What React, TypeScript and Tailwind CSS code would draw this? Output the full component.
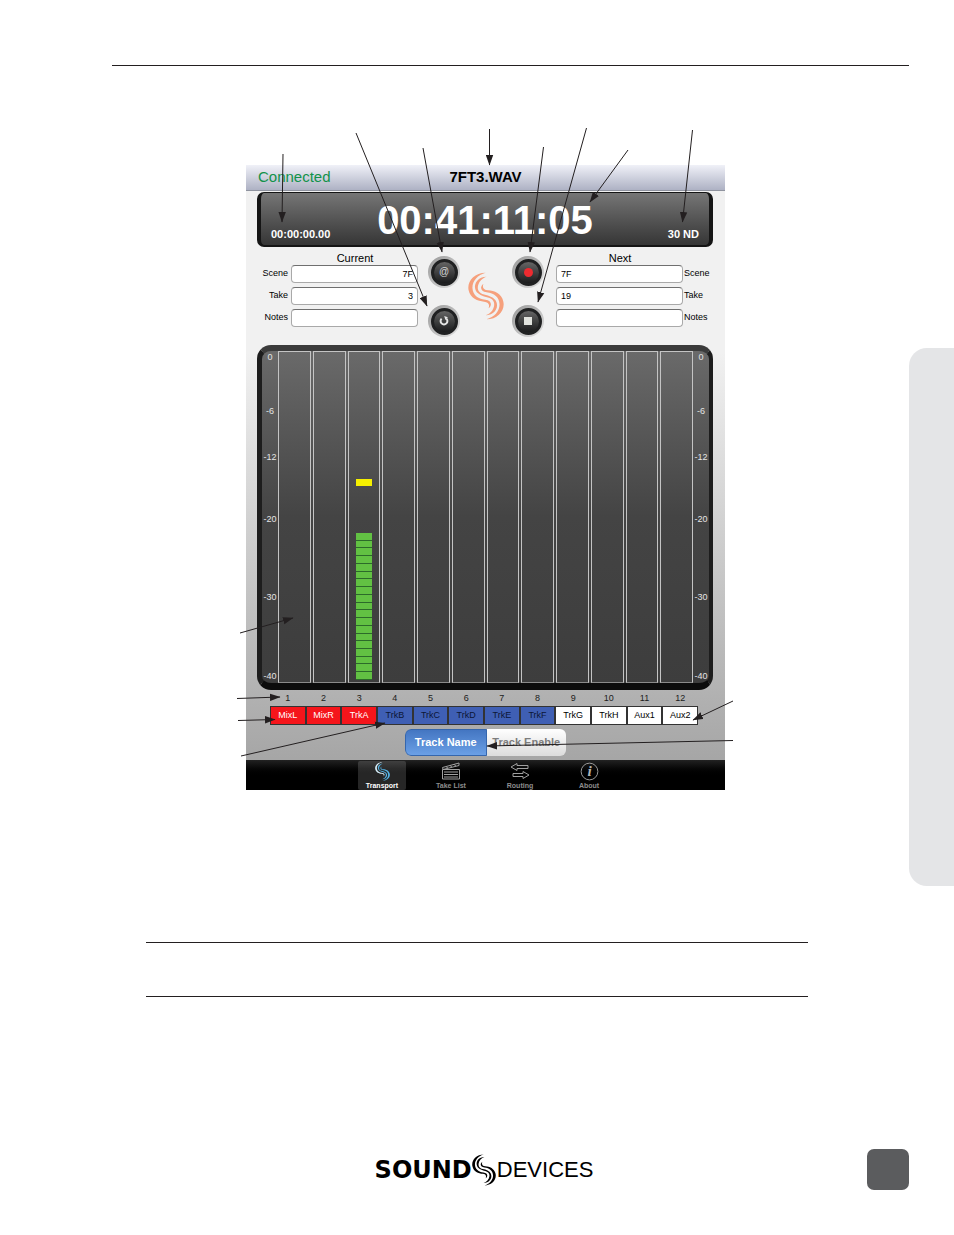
import { useState, type ReactNode } from 'react'

type Track = {
  id: number
  name: string
  tone: 'red' | 'blue' | 'white'
}

type Arrow = [number, number, number, number]

const tracks: Track[] = [
  { id: 1, name: 'MixL', tone: 'red' },
  { id: 2, name: 'MixR', tone: 'red' },
  { id: 3, name: 'TrkA', tone: 'red' },
  { id: 4, name: 'TrkB', tone: 'blue' },
  { id: 5, name: 'TrkC', tone: 'blue' },
  { id: 6, name: 'TrkD', tone: 'blue' },
  { id: 7, name: 'TrkE', tone: 'blue' },
  { id: 8, name: 'TrkF', tone: 'blue' },
  { id: 9, name: 'TrkG', tone: 'white' },
  { id: 10, name: 'TrkH', tone: 'white' },
  { id: 11, name: 'Aux1', tone: 'white' },
  { id: 12, name: 'Aux2', tone: 'white' },
]

const toneClass = {
  red: 'bg-[#f5151b] text-white',
  blue: 'bg-[#3f5fb4] text-[#0c1636]',
  white: 'bg-white text-black',
}

const ticks = [
  { label: '0', gap: '' },
  { label: '-6', gap: 'mt-11' },
  { label: '-12', gap: 'mt-9' },
  { label: '-20', gap: 'mt-[52px]' },
  { label: '-30', gap: 'mt-[68px]' },
  { label: '-40', gap: 'mt-[69px]' },
]

// x1, y1, x2, y2 with the head at the second point
const arrows: Arrow[] = [
  [283, 154, 282, 222],
  [356, 133, 427, 306],
  [423, 148, 442, 252],
  [489.5, 129, 489.5, 165],
  [543.5, 147, 530, 252],
  [586.5, 128, 538, 302],
  [628, 150, 590, 202],
  [692.5, 130, 682.5, 222],
  [240, 633, 293, 618],
  [237, 698.5, 280, 697],
  [238, 720.5, 275, 719.5],
  [241, 756, 385, 723],
  [733, 701, 693, 720],
  [733, 740.5, 487, 746],
]

// three ribbons, the last one is the first turned by half a circle
function Swirl({ className, top, bottom }: { className: string; top: string; bottom: string }) {
  const ribbon =
    'M87 31C50 31 27 58 33 84C38 108 62 117 82 118C95 119 101 126 96 138C109 128 105 114 86 112C62 109 46 98 45 76C45 55 62 37 87 31Z'
  return (
    <svg viewBox="31 29 114 144" preserveAspectRatio="none" className={className} aria-hidden="true">
      <path d={ribbon} fill={top} />
      <path
        d="M90 43C64 43 49 62 54 80C57 93 72 100 88 104C105 107 115 114 114 128C112 145 100 155 86 159C112 159 127 140 122 122C119 109 104 102 88 98C71 95 61 88 62 74C64 58 76 47 90 43Z"
        fill={bottom}
      />
      <path d={ribbon} fill={bottom} transform="rotate(180 88 101)" />
    </svg>
  )
}

function Callouts() {
  return (
    <svg
      viewBox="236 125 500 665"
      preserveAspectRatio="none"
      className="pointer-events-none absolute -top-10 -left-[10px] h-[665px] w-[calc(100%+21px)] max-w-none"
      aria-hidden="true"
    >
      <defs>
        <marker id="head" markerUnits="userSpaceOnUse" markerWidth="11" markerHeight="8" refX="10" refY="4" orient="auto">
          <path d="M0 0.3L10.5 4L0 7.7Z" fill="#231f20" />
        </marker>
      </defs>
      {arrows.map(([x1, y1, x2, y2]) => (
        <line key={`${x1}-${y1}`} x1={x1} y1={y1} x2={x2} y2={y2} stroke="#231f20" strokeWidth="1" markerEnd="url(#head)" />
      ))}
    </svg>
  )
}

function Field({ id, label, value, side }: { id: string; label: string; value: string; side: 'left' | 'right' }) {
  const left = side === 'left'
  return (
    <div className={`flex h-[18px] items-center ${left ? '' : 'flex-row-reverse'}`}>
      <label htmlFor={id} className={`w-7 shrink-0 text-[9px] ${left ? 'mr-[3px] text-right' : 'ml-px'}`}>
        {label}
      </label>
      <input
        id={id}
        type="text"
        defaultValue={value}
        className={`h-[18px] min-w-0 flex-1 rounded-[4px] border border-[#a9a9a9] border-t-[#6f6f6f] bg-white px-1 text-[9px] text-black outline-none ${left ? 'text-right' : ''}`}
      />
    </div>
  )
}

function RoundButton({ label, children }: { label: string; children: ReactNode }) {
  return (
    <button
      type="button"
      aria-label={label}
      className="flex size-8 items-center justify-center rounded-full bg-linear-to-br from-[#989898] to-[#e2e2e2]"
    >
      <span className="flex size-[27px] items-center justify-center rounded-full border-[3px] border-[#202122] bg-linear-to-b from-[#666] to-[#1c1d1e] text-[10px] leading-none text-[#d5d5d5]">
        {children}
      </span>
    </button>
  )
}

function Scale() {
  return (
    <div className="flex w-4 shrink-0 flex-col items-center pt-px text-[9px] leading-[10px] text-[#e4e4e4]">
      {ticks.map((t) => (
        <span key={t.label} className={t.gap}>{t.label}</span>
      ))}
    </div>
  )
}

function Meters() {
  return (
    <div className="mr-3 ml-[11px] flex h-[345px] rounded-[14px] border-t-[6px] border-r-4 border-b-[7px] border-l-[5px] border-t-[#3b3b3b] border-r-[#1d1d1d] border-b-[#0c0c0c] border-l-[#1d1d1d] bg-linear-to-b from-[#6a6a6a] via-[#444] to-[#3d3d3d]">
      <Scale />
      <div className="grid flex-1 grid-cols-12 gap-[2px]">
        {tracks.map((t) => (
          <div key={t.id} className="flex flex-col items-center border border-[#c4c4c4] border-b-[#8a8a8a]">
            {t.id === 3 && (
              <>
                <div className="mt-[127px] h-[7px] w-4 bg-[#f6f000]" />
                <div className="mt-[47px] flex h-[147px] w-4 flex-col">
                  {Array.from({ length: 19 }, (_, i) => (
                    <div key={i} className="flex-1 border-b border-[#2c6a2a] bg-[#62c143]" />
                  ))}
                </div>
              </>
            )}
          </div>
        ))}
      </div>
      <Scale />
    </div>
  )
}

function TabItem({ label, active, children }: { label: string; active?: boolean; children: ReactNode }) {
  return (
    <button
      type="button"
      className={`flex h-[29px] w-12 flex-col items-center justify-between rounded-[2px] pt-px text-[7px] leading-[8px] font-bold ${
        active ? 'bg-white/15 text-white' : 'text-[#8d8d8d]'
      }`}
    >
      {children}
      <span className="whitespace-nowrap">{label}</span>
    </button>
  )
}

function Recorder() {
  const [mode, setMode] = useState('name')

  return (
    <div className="flex h-[625px] flex-col bg-linear-to-b from-[#f1f1f1] from-30% to-[#a6a6a6] to-95%">
      {/* title bar */}
      <div className="grid h-[26px] shrink-0 grid-cols-3 items-center border-b border-[#8f939f] bg-linear-to-b from-[#f0f1f8] to-[#aeb2c4] px-3 pb-[2px] text-[15px] leading-[21px]">
        <span className="text-[#12924a]">Connected</span>
        <span className="text-center font-bold text-black">7FT3.WAV</span>
      </div>

      {/* time display */}
      <div className="mr-3 ml-[11px] mt-px flex h-[55px] shrink-0 items-end justify-between rounded-[7px] border-t border-r-4 border-b-2 border-l-4 border-[#151515] bg-linear-to-b from-[#767676] to-[#363636] px-[10px] pb-[5px] text-[11px] leading-3 font-bold text-white">
        <span className="w-16">00:00:00.00</span>
        <span className="text-[40px] leading-10">00:41:11:05</span>
        <span className="w-16 text-right">30 ND</span>
      </div>

      {/* scene / take / notes */}
      <div className="flex h-[98px] shrink-0 pt-[5px] text-black">
        <div className="flex flex-1 flex-col gap-1 pl-[14px]">
          <div className="-mb-1 pl-8 text-center text-[11px] leading-[13px]">Current</div>
          <Field id="cur-scene" label="Scene" value="7F" side="left" />
          <Field id="cur-take" label="Take" value="3" side="left" />
          <Field id="cur-notes" label="Notes" value="" side="left" />
        </div>
        <div className="flex w-[138px] shrink-0 justify-center gap-2 pt-[4px] pr-[2px]">
          <div className="flex flex-col gap-[17px]">
            <RoundButton label="Circle take">@</RoundButton>
            <RoundButton label="False take">
              <svg viewBox="0 0 12 12" className="size-3" fill="none" stroke="#e6e6e6" strokeWidth="2" aria-hidden="true">
                <path d="M3.6 3.6A3.4 3.4 0 1 0 8.4 3.6" />
                <path d="M6.2 1L9.9 2.2L7.4 5Z" fill="#e6e6e6" stroke="none" />
              </svg>
            </RoundButton>
          </div>
          <Swirl className="mt-4 h-12 w-9" top="#f6a07c" bottom="#f6a07c" />
          <div className="flex flex-col gap-[17px]">
            <RoundButton label="Record">
              <span className="size-[9px] rounded-full bg-[#ee2b30]" />
            </RoundButton>
            <RoundButton label="Stop">
              <span className="size-2 bg-[#e2e4df]" />
            </RoundButton>
          </div>
        </div>
        <div className="flex flex-1 flex-col gap-1 pr-4">
          <div className="-mb-1 pr-7 text-center text-[11px] leading-[13px]">Next</div>
          <Field id="next-scene" label="Scene" value="7F" side="right" />
          <Field id="next-take" label="Take" value="19" side="right" />
          <Field id="next-notes" label="Notes" value="" side="right" />
        </div>
      </div>

      <Meters />

      {/* track labels */}
      <div className="mr-[27px] ml-6 grid grid-cols-12 text-center text-[9px] text-[#1b1b1b]">
        {tracks.map((t) => (
          <span key={t.id} className="pt-px pb-px leading-[14px]">{t.id}</span>
        ))}
        {tracks.map((t) => (
          <span key={t.name} className={`h-[19px] border border-[#333] leading-[17px] ${toneClass[t.tone]}`}>
            {t.name}
          </span>
        ))}
      </div>

      <div className="mx-auto mt-1 flex h-[27px] w-[161px] overflow-hidden rounded-[6px] text-[11px] font-bold">
        <button
          type="button"
          aria-pressed={mode === 'name'}
          onClick={() => setMode('name')}
          className={`flex-1 whitespace-nowrap ${mode === 'name' ? 'rounded-l-[6px] border border-[#3566ad] bg-linear-to-b from-[#4476c2] to-[#6ba0e6] text-white' : 'bg-linear-to-b from-white to-[#dcdcdc] text-[#7c7c7c]'}`}
        >
          Track Name
        </button>
        <button
          type="button"
          aria-pressed={mode === 'enable'}
          onClick={() => setMode('enable')}
          className={`flex-1 whitespace-nowrap ${mode === 'enable' ? 'rounded-r-[6px] border border-[#3566ad] bg-linear-to-b from-[#4476c2] to-[#6ba0e6] text-white' : 'bg-linear-to-b from-white to-[#dcdcdc] text-[#7c7c7c]'}`}
        >
          Track Enable
        </button>
      </div>

      {/* tab bar */}
      <nav className="mt-auto flex h-[30px] shrink-0 justify-center gap-[21px] bg-linear-to-b from-[#222] to-black to-60% pt-px">
        <TabItem label="Transport" active>
          <Swirl className="h-[19px] w-[15px]" top="#d5edf8" bottom="#55b4e6" />
        </TabItem>
        <TabItem label="Take List">
          <svg viewBox="0 0 20 18" className="h-[18px] w-5" fill="none" stroke="#a0a0a0" strokeWidth="1" aria-hidden="true">
            <path d="M1.5 5.5L18 1V3.5L2 7.5ZM5 4.6L7 6.2M9 3.5L11 5.2M13 2.4L15 4.2M1.5 7.5H18.5V17H1.5Z" />
            <path d="M3 10H17M3 12.5H17M3 15H17" strokeWidth="1.2" />
          </svg>
        </TabItem>
        <TabItem label="Routing">
          <svg viewBox="0 0 20 18" className="h-[18px] w-5" fill="none" stroke="#a0a0a0" strokeWidth="1" aria-hidden="true">
            <path d="M1 5L7 1.5V3.5H18V6.5H7V8.5ZM19 13L13 9.5V11.5H3V14.5H13V16.5Z" />
          </svg>
        </TabItem>
        <TabItem label="About">
          <svg viewBox="0 0 20 20" className="size-[19px]" aria-hidden="true">
            <circle cx="10" cy="10" r="8.8" fill="none" stroke="#a0a0a0" strokeWidth="1" />
            <text x="10" y="15" textAnchor="middle" fontSize="16" fontStyle="italic" fontWeight="700" fontFamily="'Liberation Serif', serif" fill="#b4b4b4">i</text>
          </svg>
        </TabItem>
      </nav>
    </div>
  )
}

export default function App() {
  return (
    <div className="flex min-h-screen bg-white font-['Liberation_Sans',Arial,sans-serif]">
      <div className="flex min-w-0 flex-1 flex-col">
        <hr className="mt-[65px] ml-28 border-t border-[#231f20]" />

        <main>
          <figure className="relative mt-[99px] mr-[184px] ml-[246px]">
            <Recorder />
            <Callouts />
          </figure>
          <div className="mt-[152px] mr-[101px] ml-[146px] h-[55px] border-y border-[#231f20]" />
        </main>

        <footer className="mt-[152px] flex items-center pb-[45px]">
          <div className="flex flex-1 items-center justify-center pl-[101px] text-[22px] leading-8 text-black">
            <span className="font-['DejaVu_Sans',sans-serif] text-[24px] font-bold">SOUND</span>
            <Swirl className="h-8 w-6" top="#000" bottom="#000" />
            <span className="pl-px">DEVICES</span>
          </div>
          <div className="h-[41px] w-[42px] rounded-[7px] bg-[#5b5c5e]" />
        </footer>
      </div>

      <aside className="w-[45px] shrink-0 pt-[348px]">
        <div className="h-[538px] rounded-l-[18px] bg-[#e4e5e7]" />
      </aside>
    </div>
  )
}
